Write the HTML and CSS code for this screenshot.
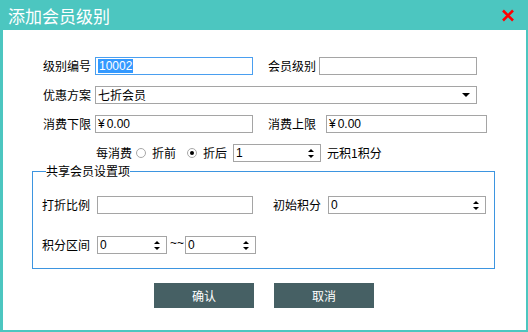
FILE: index.html
```html
<!DOCTYPE html>
<html lang="zh">
<head>
    <meta charset="UTF-8">
    <title>添加会员级别</title>
    <link rel="stylesheet" href="styles.css">
</head>
<body>
    <div class="window">
        <div class="title">
            <span>添加会员级别</span>
            <svg class="close" width="14" height="13" viewBox="0 0 14 13">
                <path d="M2 1.5 L12 11.5 M12 1.5 L2 11.5" stroke="#f00" stroke-width="2.6" fill="none"/>
            </svg>
        </div>
        <div class="content">
            <div class="row">
                <span class="label">级别编号</span>
                <div class="box w158 focus"><span class="sel">10002</span></div>
                <span class="label lbl2">会员级别</span>
                <div class="box w158 gap3"></div>
            </div>
            <div class="row">
                <span class="label">优惠方案</span>
                <div class="box w382 select"><span>七折会员</span><i class="down"></i></div>
            </div>
            <div class="row">
                <span class="label">消费下限</span>
                <div class="box w158"><span><em class="yen">¥</em>0.00</span></div>
                <span class="label lbl2">消费上限</span>
                <div class="box w161 gap11"><span><em class="yen">¥</em>0.00</span></div>
            </div>
            <div class="row row4">
                <span>每消费</span>
                <span class="radio"></span>
                <span class="rtext">折前</span>
                <span class="radio on"></span>
                <span class="rtext">折后</span>
                <div class="box spin w88"><span>1</span><i class="arrows"><b class="up"></b><b class="dn"></b></i></div>
                <span class="rtext">元积1积分</span>
            </div>

            <fieldset class="group">
                <legend>共享会员设置项</legend>
                <div class="row grow1">
                    <span class="label">打折比例</span>
                    <div class="box w156 gap7"></div>
                    <span class="label lbl3">初始积分</span>
                    <div class="box spin w158 gap7"><span>0</span><i class="arrows"><b class="up"></b><b class="dn"></b></i></div>
                </div>
                <div class="row grow2">
                    <span class="label">积分区间</span>
                    <div class="box spin w70 gap7"><span>0</span><i class="arrows"><b class="up"></b><b class="dn"></b></i></div>
                    <span class="tilde">~~</span>
                    <div class="box spin w71"><span>0</span><i class="arrows"><b class="up"></b><b class="dn"></b></i></div>
                </div>
            </fieldset>

            <div class="buttons">
                <button>确认</button>
                <button>取消</button>
            </div>
        </div>
    </div>
</body>
</html>
```

FILE: styles.css
```css
body {
    margin: 0;
    font-family: "Noto Sans CJK SC", sans-serif;
    font-size: 12px;
    color: #000;
}
.window {
    width: 528px;
    height: 332px;
    box-sizing: border-box;
    background: #4cc6c0;
    display: flex;
    flex-direction: column;
}
.title {
    height: 30px;
    display: flex;
    align-items: center;
    justify-content: space-between;
    padding: 0 13px 0 8px;
    color: #fff;
    font-size: 17px;
}
.close {
    display: block;
}
.content {
    flex: 1;
    margin: 0 2px 2px 3px;
    background: #fff;
    padding-top: 27px;
}
.row {
    display: flex;
    align-items: center;
    height: 18px;
    margin-left: 40px;
    margin-bottom: 11px;
    line-height: 14px;
}
.row4 {
    margin-left: 93px;
    margin-bottom: 0;
}
.label {
    width: 48px;
    margin-right: 4px;
    white-space: nowrap;
}
.lbl2 {
    margin-left: 15px;
    margin-right: 3px;
}
.lbl3 {
    margin-left: 20px;
}
.box {
    height: 18px;
    box-sizing: border-box;
    border: 1px solid #a5a5a5;
    display: flex;
    align-items: center;
    padding-left: 2px;
    font-family: "Liberation Sans", "Noto Sans CJK SC", sans-serif;
    font-size: 12px;
}
.box span {
    line-height: 14px;
}
.yen {
    font-style: normal;
    margin-right: 2px;
}
.focus {
    border-color: #4a9ff0;
}
.sel {
    background: #3399ff;
    color: #fff;
    padding: 0 1px;
}
.select span {
    font-family: "Noto Sans CJK SC", sans-serif;
    flex: 1;
}
.down {
    width: 0;
    height: 0;
    border-left: 4px solid transparent;
    border-right: 4px solid transparent;
    border-top: 4px solid #000;
    margin-right: 6px;
}
.spin span {
    flex: 1;
}
.arrows {
    display: flex;
    flex-direction: column;
    gap: 3px;
    margin-right: 6px;
}
.up, .dn {
    width: 0;
    height: 0;
    border-left: 3px solid transparent;
    border-right: 3px solid transparent;
}
.up {
    border-bottom: 3px solid #000;
}
.dn {
    border-top: 3px solid #000;
}
.w70 { width: 70px; }
.w71 { width: 71px; }
.w88 { width: 88px; }
.w156 { width: 156px; }
.w158 { width: 158px; }
.w161 { width: 161px; }
.w382 { width: 382px; }
.gap3 { margin-left: 0; }
.gap7 { margin-left: 3px; }
.gap11 { margin-left: 7px; }
.radio {
    width: 10px;
    height: 10px;
    box-sizing: border-box;
    border: 1px solid #a8a8a8;
    border-radius: 50%;
    margin-left: 4px;
    display: flex;
    align-items: center;
    justify-content: center;
}
.radio.on::after {
    content: "";
    width: 4px;
    height: 4px;
    border-radius: 50%;
    background: #000;
}
.rtext {
    margin-left: 6px;
    margin-right: 0;
}
.row4 .radio.on {
    margin-left: 11px;
}
.row4 .box {
    margin-left: 6px;
}
.group {
    margin: 2px 0 0 29px;
    width: 463px;
    box-sizing: border-box;
    padding: 0 0 14px 9px;
    border: 1px solid #3d95e0;
    min-width: 0;
}
.group legend {
    padding: 0;
    margin-left: 4px;
    line-height: 14px;
}
.group .row {
    margin-left: 0;
    margin-bottom: 0;
}
.grow1 {
    margin-top: 18px;
}
.grow2 {
    margin-top: 22px;
}
.tilde {
    margin: 0 2px 0 3px;
    width: 13px;
    font-family: "Liberation Sans", sans-serif;
    align-self: flex-start;
}
.buttons {
    display: flex;
    gap: 20px;
    margin: 14px 0 0 151px;
}
.buttons button {
    width: 100px;
    height: 25px;
    border: none;
    background: #466064;
    color: #fff;
    font-family: "Noto Sans CJK SC", sans-serif;
    font-size: 12px;
    padding: 0;
}
```
